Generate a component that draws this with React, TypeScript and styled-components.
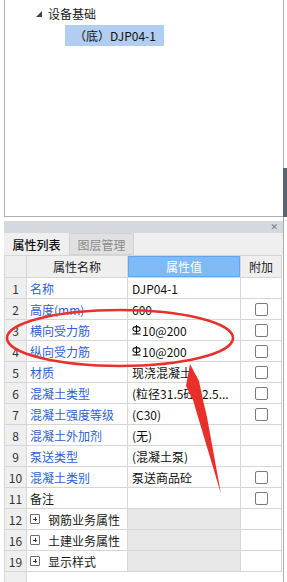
import React from "react";
import styled, { createGlobalStyle } from "styled-components";

const GlobalStyle = createGlobalStyle`
  html, body {
    margin: 0;
    padding: 0;
    background: #ffffff;
  }
  body {
    font-family: "Noto Sans CJK SC", "Noto Sans", sans-serif;
    font-size: 12px;
    color: #1a1a1a;
  }
`;

type Row = {
  no: number;
  name: string;
  value?: string;
  rebar?: boolean;
  check?: boolean;
  plain?: boolean;
  group?: boolean;
};

const ROWS: Row[] = [
  { no: 1, name: "名称", value: "DJP04-1" },
  { no: 2, name: "高度(mm)", value: "600", check: true },
  { no: 3, name: "横向受力筋", value: "10@200", rebar: true, check: true },
  { no: 4, name: "纵向受力筋", value: "10@200", rebar: true, check: true },
  { no: 5, name: "材质", value: "现浇混凝土", check: true },
  { no: 6, name: "混凝土类型", value: "(粒径31.5砼32.5...", check: true },
  { no: 7, name: "混凝土强度等级", value: "(C30)", check: true },
  { no: 8, name: "混凝土外加剂", value: "(无)" },
  { no: 9, name: "泵送类型", value: "(混凝土泵)" },
  { no: 10, name: "混凝土类别", value: "泵送商品砼", check: true },
  { no: 11, name: "备注", value: "", check: true, plain: true },
  { no: 12, name: "钢筋业务属性", group: true },
  { no: 16, name: "土建业务属性", group: true },
  { no: 19, name: "显示样式", group: true },
];

const Page = styled.div`
  position: relative;
  width: 287px;
  height: 582px;
  overflow: hidden;
  display: flex;
`;

const Gutter = styled.div`
  width: 4px;
  flex-shrink: 0;
`;

const Column = styled.div`
  width: 279px;
  display: flex;
  flex-direction: column;
`;

const Rail = styled.div`
  width: 4px;
  flex-shrink: 0;
  border-left: 1px solid #adadad;
  box-sizing: border-box;
  display: flex;
  flex-direction: column;
  padding-top: 168px;
`;

const RailThumb = styled.div`
  height: 49px;
  margin-left: -1px;
  background: #5c6470;
`;

const TreePanel = styled.div`
  height: 217px;
  box-sizing: border-box;
  border-left: 1px solid #adadad;
  border-bottom: 1px solid #adadad;
  padding-top: 3px;
  display: flex;
  flex-direction: column;
`;

const TreeRow = styled.div<{ indent: number }>`
  display: flex;
  align-items: center;
  height: 20px;
  padding-left: ${({ indent }) => indent}px;
`;

const Expander = styled.svg`
  width: 6px;
  height: 6px;
  margin-right: 6px;
  margin-top: 1px;
`;

const TreeLabel = styled.span<{ selected?: boolean }>`
  display: inline-flex;
  align-items: center;
  height: 21px;
  padding: 0 8px 0 9px;
  background: ${({ selected }) => (selected ? "#b1cdf0" : "transparent")};
  color: #111;
`;

const Spacer = styled.div`
  height: 4px;
`;

const PropPanel = styled.div`
  flex: 1;
  display: flex;
  flex-direction: column;
  background: #ffffff;
`;

const TitleBar = styled.div`
  height: 12px;
  background: #d5d8de;
  display: flex;
  justify-content: flex-end;
  align-items: center;
  padding-right: 5px;
  font-family: "DejaVu Sans", sans-serif;
  font-size: 9px;
  color: #7a7d84;
`;

const TabStrip = styled.div`
  height: 22px;
  background: #efefef;
  display: flex;
`;

const Tab = styled.div<{ active?: boolean }>`
  width: ${({ active }) => (active ? 65 : 65)}px;
  box-sizing: border-box;
  display: flex;
  align-items: center;
  justify-content: center;
  background: ${({ active }) => (active ? "#efefef" : "#e1e1e1")};
  border: ${({ active }) => (active ? "none" : "1px solid #d2d2d2")};
  color: ${({ active }) => (active ? "#111" : "#8a8a8a")};
  font-weight: ${({ active }) => (active ? 500 : 400)};
`;

const GridRow = styled.div<{ header?: boolean }>`
  display: grid;
  grid-template-columns: 21px 100px 112px 40px;
  column-gap: 1px;
  width: 278px;
  box-sizing: border-box;
  background: #d6d6d6;
  border-left: 1px solid #d6d6d6;
  border-right: 1px solid #d6d6d6;
  border-top: ${({ header }) => (header ? "1px solid #d6d6d6" : "none")};
  border-bottom: 1px solid #d6d6d6;
  height: ${({ header }) => (header ? 23 : 21)}px;
`;

const NumCell = styled.div`
  background: #efefef;
  color: #333;
  display: flex;
  align-items: center;
  justify-content: center;
`;

const HeadCell = styled.div<{ accent?: boolean }>`
  background: ${({ accent }) => (accent ? "#7fbaf6" : "#efefef")};
  color: ${({ accent }) => (accent ? "#ffffff" : "#222")};
  box-shadow: ${({ accent }) => (accent ? "inset 0 0 0 1px #64a6ee" : "none")};
  display: flex;
  align-items: center;
  justify-content: center;
`;

const NameCell = styled.div<{ plain?: boolean }>`
  background: #ffffff;
  color: ${({ plain }) => (plain ? "#1a1a1a" : "#2d5fd6")};
  display: flex;
  align-items: center;
  padding-left: 3px;
  white-space: nowrap;
  overflow: hidden;
`;

const ValueCell = styled.div<{ shaded?: boolean }>`
  background: ${({ shaded }) => (shaded ? "#e8e8e8" : "#ffffff")};
  color: #111;
  display: flex;
  align-items: center;
  padding-left: 4px;
  white-space: nowrap;
  overflow: hidden;
`;

const ExtraCell = styled.div`
  background: #ffffff;
  display: flex;
  align-items: center;
  justify-content: center;
`;

const CheckBox = styled.span`
  width: 13px;
  height: 13px;
  box-sizing: border-box;
  border: 1px solid #7b7b7b;
  border-radius: 2px;
  background: #fff;
  margin-left: 1px;
`;

const PlusBox = styled.span`
  width: 10px;
  height: 10px;
  box-sizing: border-box;
  border: 1px solid #6e6e6e;
  border-radius: 1px;
  margin: 0 8px 0 0;
  position: relative;
  flex-shrink: 0;
  &::before,
  &::after {
    content: "";
    position: absolute;
    background: #333;
  }
  &::before {
    left: 2px;
    right: 2px;
    top: 3.5px;
    height: 1px;
  }
  &::after {
    top: 2px;
    bottom: 2px;
    left: 3.5px;
    width: 1px;
  }
`;

const GroupName = styled(NameCell)`
  color: #1a1a1a;
`;

const RebarMark = styled.svg`
  width: 9px;
  height: 11px;
  margin-right: 1px;
  margin-top: -2px;
`;

const Filler = styled.div`
  flex: 1;
  display: flex;
`;

const FillerNum = styled.div`
  width: 23px;
  box-sizing: border-box;
  background: #efefef;
  border-left: 1px solid #d6d6d6;
  border-right: 1px solid #d6d6d6;
`;

const Overlay = styled.svg`
  position: absolute;
  left: 0;
  top: 0;
  width: 287px;
  height: 582px;
  pointer-events: none;
`;

const Rebar = () => (
  <RebarMark viewBox="0 0 9 11">
    <ellipse cx="4.5" cy="5" rx="3.6" ry="2.4" fill="none" stroke="#111" strokeWidth="1.1" />
    <line x1="4.5" y1="1" x2="4.5" y2="10" stroke="#111" strokeWidth="1.1" />
    <line x1="0.5" y1="10" x2="8.5" y2="10" stroke="#111" strokeWidth="1.1" />
  </RebarMark>
);

export default function App() {
  return (
    <>
      <GlobalStyle />
      <Page>
        <Gutter />
        <Column>
          <TreePanel>
            <TreeRow indent={31}>
              <Expander viewBox="0 0 6 6">
                <polygon points="6,0 6,6 0,6" fill="#444" />
              </Expander>
              <span>设备基础</span>
            </TreeRow>
            <TreeRow indent={60} style={{ marginTop: 2 }}>
              <TreeLabel selected>（底）DJP04-1</TreeLabel>
            </TreeRow>
          </TreePanel>
          <Spacer />
          <PropPanel>
            <TitleBar>✕</TitleBar>
            <TabStrip>
              <Tab active>属性列表</Tab>
              <Tab>图层管理</Tab>
            </TabStrip>
            <GridRow header>
              <HeadCell />
              <HeadCell>属性名称</HeadCell>
              <HeadCell accent>属性值</HeadCell>
              <HeadCell>附加</HeadCell>
            </GridRow>
            {ROWS.map((r) =>
              r.group ? (
                <GridRow key={r.no}>
                  <NumCell>{r.no}</NumCell>
                  <GroupName>
                    <PlusBox />
                    {r.name}
                  </GroupName>
                  <ValueCell shaded />
                  <ExtraCell />
                </GridRow>
              ) : (
                <GridRow key={r.no}>
                  <NumCell>{r.no}</NumCell>
                  <NameCell plain={r.plain}>{r.name}</NameCell>
                  <ValueCell>
                    {r.rebar && <Rebar />}
                    {r.value}
                  </ValueCell>
                  <ExtraCell>{r.check && <CheckBox />}</ExtraCell>
                </GridRow>
              )
            )}
            <Filler>
              <FillerNum />
            </Filler>
          </PropPanel>
        </Column>
        <Rail>
          <RailThumb />
        </Rail>
        <Overlay viewBox="0 0 287 582">
          <ellipse cx="120" cy="338" rx="113" ry="28" fill="none" stroke="#e8312b" strokeWidth="2.6" />
          <polygon
            points="190,364 199,381 203,400 207,417 221,494 198,417 193,400 186,386"
            fill="#ea2f2a"
          />
        </Overlay>
      </Page>
    </>
  );
}
